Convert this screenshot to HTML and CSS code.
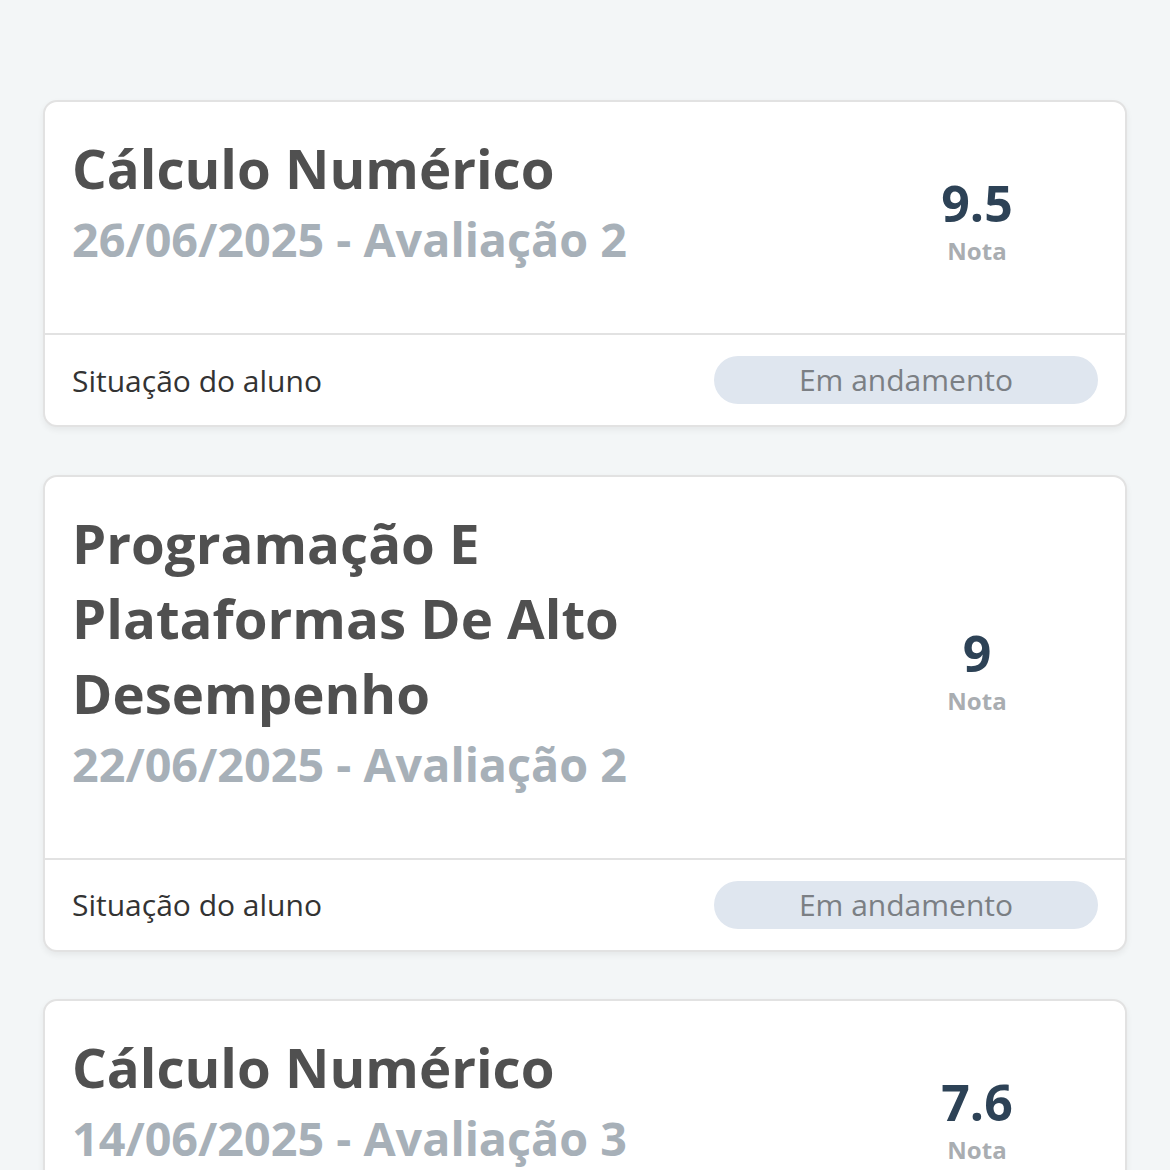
FILE: index.html
```html
<!DOCTYPE html>
<html lang="pt">
<head>
<meta charset="utf-8">
<link rel="stylesheet" href="styles.css">
</head>
<body>
<main class="list">
  <article class="card">
    <div class="card-head">
      <div class="info">
        <h2 class="title">Cálculo Numérico</h2>
        <p class="sub">26/06/2025 - Avaliação 2</p>
      </div>
      <div class="grade">
        <span class="grade-value">9.5</span>
        <span class="grade-label">Nota</span>
      </div>
    </div>
    <div class="card-foot">
      <span class="status-label">Situação do aluno</span>
      <span class="pill">Em andamento</span>
    </div>
  </article>
  <article class="card">
    <div class="card-head">
      <div class="info">
        <h2 class="title">Programação E Plataformas De Alto Desempenho</h2>
        <p class="sub">22/06/2025 - Avaliação 2</p>
      </div>
      <div class="grade">
        <span class="grade-value">9</span>
        <span class="grade-label">Nota</span>
      </div>
    </div>
    <div class="card-foot">
      <span class="status-label">Situação do aluno</span>
      <span class="pill">Em andamento</span>
    </div>
  </article>
  <article class="card">
    <div class="card-head">
      <div class="info">
        <h2 class="title">Cálculo Numérico</h2>
        <p class="sub">14/06/2025 - Avaliação 3</p>
      </div>
      <div class="grade">
        <span class="grade-value">7.6</span>
        <span class="grade-label">Nota</span>
      </div>
    </div>
    <div class="card-foot">
      <span class="status-label">Situação do aluno</span>
      <span class="pill">Em andamento</span>
    </div>
  </article>
</main>
</body>
</html>
```
FILE: styles.css
```css
* { box-sizing: border-box; }
html, body {
  margin: 0;
  padding: 0;
  background: #f3f6f7;
  font-family: "Open Sans", "Noto Sans", sans-serif;
}
.list {
  padding: 100px 43px 40px;
  display: flex;
  flex-direction: column;
  gap: 47.5px;
}
.card {
  background: #fff;
  border: 2px solid #e2e2e2;
  border-radius: 14px;
  box-shadow: 0 3px 6px rgba(0,0,0,0.06);
  overflow: hidden;
}
.card-head {
  display: flex;
  justify-content: space-between;
  align-items: center;
  padding: 29px 28px 62px 27px;
  border-bottom: 2px solid #e2e2e2;
}
.info {
  width: 660px;
}
.title {
  margin: 0;
  font-size: 54.6px;
  line-height: 75px;
  font-weight: 700;
  color: #505050;
}
.sub {
  margin: 1px 0 0;
  font-size: 46.7px;
  line-height: 64px;
  font-weight: 700;
  color: #a7b0b8;
}
.grade {
  width: 240px;
  display: flex;
  flex-direction: column;
  align-items: center;
  margin-top: 40px;
}
.grade-value {
  font-size: 50px;
  line-height: 58px;
  font-weight: 700;
  color: #2d4256;
}
.grade-label {
  margin-top: 2px;
  font-size: 24px;
  line-height: 34px;
  font-weight: 700;
  color: #a9adb1;
}
.card-foot {
  display: flex;
  justify-content: space-between;
  align-items: center;
  padding: 21px 27px 21px 27px;
}
.status-label {
  font-size: 30px;
  color: #333;
}
.pill {
  width: 384px;
  height: 48px;
  border-radius: 24px;
  background: #dfe6ef;
  color: #7b7f84;
  font-size: 30px;
  line-height: 48px;
  text-align: center;
}
```
